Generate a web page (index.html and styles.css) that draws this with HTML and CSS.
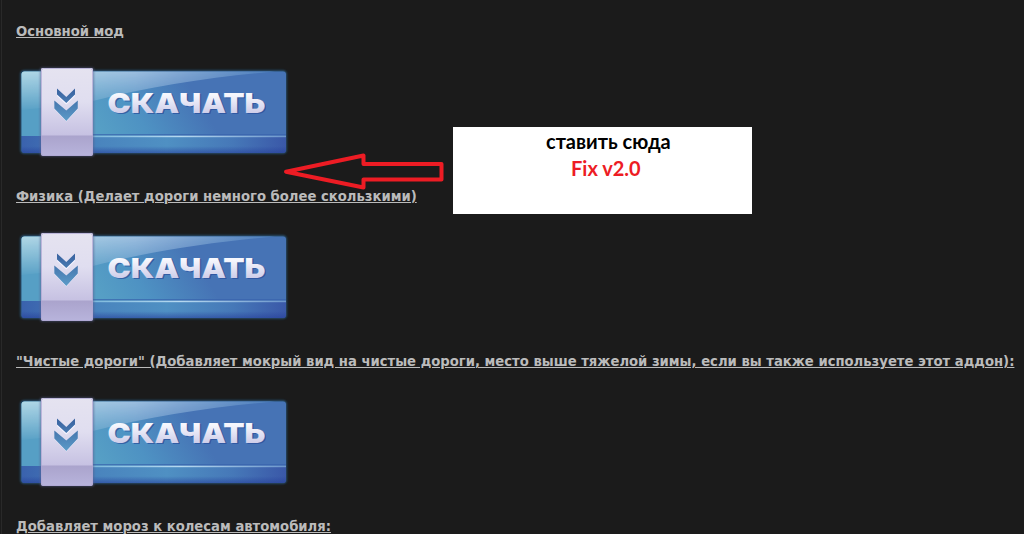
FILE: index.html
```html
<!DOCTYPE html>
<html lang="ru">
<head>
  <meta charset="UTF-8">
  <title>Скачать мод</title>
  <link rel="stylesheet" href="styles.css">
</head>
<body>

  <!-- Shared button artwork -->
  <svg class="defs" width="0" height="0">
    <defs>
      <linearGradient id="body" gradientUnits="userSpaceOnUse" x1="100" y1="130" x2="185" y2="78">
        <stop offset="0" stop-color="#569fc5"/>
        <stop offset="0.4" stop-color="#4e92c3"/>
        <stop offset="1" stop-color="#4673b5"/>
      </linearGradient>
      <linearGradient id="gloss" x1="0" y1="0" x2="1" y2="0">
        <stop offset="0" stop-color="#b9dde9"/>
        <stop offset="0.45" stop-color="#a3c3e2"/>
        <stop offset="1" stop-color="#4e7fbd"/>
      </linearGradient>
      <linearGradient id="fade" x1="0" y1="0" x2="0" y2="1">
        <stop offset="0" stop-color="#fff" stop-opacity="0.95"/>
        <stop offset="1" stop-color="#fff" stop-opacity="0.05"/>
      </linearGradient>
      <mask id="glossMask"><rect x="16" y="70" width="280" height="40" fill="url(#fade)"/></mask>
      <linearGradient id="shelf" x1="0" y1="0" x2="1" y2="0">
        <stop offset="0" stop-color="#3a62ad"/>
        <stop offset="0.3" stop-color="#4a85be"/>
        <stop offset="0.55" stop-color="#4f90c3"/>
        <stop offset="0.8" stop-color="#4678b8"/>
        <stop offset="1" stop-color="#3a58a8"/>
      </linearGradient>
      <linearGradient id="shelfShade" x1="0" y1="0" x2="0" y2="1">
        <stop offset="0.6" stop-color="#263f9a" stop-opacity="0"/>
        <stop offset="1" stop-color="#263f9a" stop-opacity="0.6"/>
      </linearGradient>
      <linearGradient id="shine" x1="0" y1="0" x2="1" y2="0">
        <stop offset="0" stop-color="#7db9dc"/>
        <stop offset="0.45" stop-color="#b6d9f0"/>
        <stop offset="1" stop-color="#6c96cc"/>
      </linearGradient>
      <linearGradient id="tab" x1="0" y1="0" x2="0" y2="1">
        <stop offset="0" stop-color="#e5e3f0"/>
        <stop offset="0.5" stop-color="#e0def0"/>
        <stop offset="1" stop-color="#c6c1e2"/>
      </linearGradient>
      <linearGradient id="tabFoot" x1="0" y1="0" x2="0" y2="1">
        <stop offset="0.75" stop-color="#a9a2cb"/>
        <stop offset="1" stop-color="#b8b4dc"/>
      </linearGradient>
      <linearGradient id="chevron" x1="0" y1="0" x2="0" y2="1">
        <stop offset="0" stop-color="#38619f"/>
        <stop offset="1" stop-color="#5c9bc8"/>
      </linearGradient>
      <linearGradient id="letters" x1="0" y1="0" x2="0" y2="1">
        <stop offset="0.25" stop-color="#f6f7fd"/>
        <stop offset="0.8" stop-color="#cecde9"/>
      </linearGradient>
      <filter id="soft"><feGaussianBlur stdDeviation="0.8"/></filter>

      <symbol id="download" viewBox="16 60 280 105">
        <rect x="20.5" y="70.5" width="266" height="83" rx="3.5" fill="#2b5e88" filter="url(#soft)"/>
        <path d="M24.500 71.500H283a3 3 0 0 1 3 3V136H21.500V74.500a3 3 0 0 1 3-3z" fill="url(#body)"/>
        <path d="M24.500 71.500H275C220 76 150 86 93 101C65 106 40 108 21.500 110V74.500a3 3 0 0 1 3-3z" fill="url(#gloss)" mask="url(#glossMask)"/>
        <path d="M21.500 136H286V150a3 3 0 0 1-3 3H24.500a3 3 0 0 1-3-3z" fill="url(#shelf)"/>
        <path d="M21.500 136H286V150a3 3 0 0 1-3 3H24.500a3 3 0 0 1-3-3z" fill="url(#shelfShade)"/>
        <rect x="93" y="134" width="193" height="1.500" fill="#3763ad" opacity="0.7"/>
        <rect x="93" y="135.700" width="193" height="1.500" fill="url(#shine)"/>
        <rect x="40" y="67.500" width="54" height="89" rx="2" fill="#58608e" opacity="0.6" filter="url(#soft)"/>
        <rect x="41" y="68" width="52" height="88" rx="2" fill="url(#tabFoot)"/>
        <path d="M43 68H91a2 2 0 0 1 2 2V135.500H41V70a2 2 0 0 1 2-2z" fill="url(#tab)"/>
        <rect x="41.500" y="68.500" width="51" height="87" rx="2" fill="none" stroke="#aca4d1" opacity="0.7"/>
        <path d="M57 89.500l9.300 8 8.700-8v5.500l-8.700 8.500-9.300-8.500zM54.300 101l12 10 11.500-10v7l-11.500 12.500-12-12.500z" transform="translate(0 1)" fill="#f5f4ff"/>
        <path d="M57 88.500l9.300 8.500 8.700-8.500v6l-8.700 8.500-9.300-8.500zM54.300 100.500l12 10 11.500-10v8l-11.500 12.500-12-12.500z" fill="url(#chevron)"/>
        <text class="label label-shadow" x="109" y="114" textLength="158" lengthAdjust="spacingAndGlyphs">СКАЧАТЬ</text>
        <text class="label" x="107.500" y="112.700" textLength="158" lengthAdjust="spacingAndGlyphs">СКАЧАТЬ</text>
      </symbol>
    </defs>
  </svg>

  <div class="content">
    <div class="item">
      <a class="title">Основной мод</a>
      <svg class="button"><use href="#download"/></svg>
    </div>
    <div class="item">
      <a class="title">Физика (Делает дороги немного более скользкими)</a>
      <svg class="button"><use href="#download"/></svg>
    </div>
    <div class="item">
      <a class="title">"Чистые дороги" (Добавляет мокрый вид на чистые дороги, место выше тяжелой зимы, если вы также используете этот аддон):</a>
      <svg class="button"><use href="#download"/></svg>
    </div>
    <div class="item item-last">
      <a class="title">Добавляет мороз к колесам автомобиля:</a>
    </div>
  </div>

  <!-- Notes over the page -->
  <svg class="arrow" viewBox="280 150 170 45">
    <path d="M286 171.700L363.500 155.500V164H441.500V179.500H363.500V187.500Z" fill="none" stroke="#ed1c24" stroke-width="4" stroke-linejoin="round"/>
  </svg>
  <div class="note">
    <div class="note-text">ставить сюда</div>
    <div class="note-version">Fix v2.0</div>
  </div>

</body>
</html>
```
FILE: styles.css
```css
body {
  margin: 0;
  height: 534px;
  overflow: hidden;
  position: relative;
  background-color: #1b1b1b;
  font-family: "DejaVu Sans Condensed", "DejaVu Sans", sans-serif;
}

.defs {
  position: absolute;
}

.content {
  height: 534px;
  box-sizing: border-box;
  margin-left: 1px;
  padding: 21px 0 0 15px;
  border-left: 1px solid #292929;
}

.item {
  display: flex;
  flex-direction: column;
  align-items: flex-start;
  height: 165px;
}

.item-last {
  height: 18px;
}

.title {
  height: 20px;
  margin-bottom: 19px;
  margin-left: -1px;
  color: #bbb;
  font-size: 14.67px;
  font-weight: bold;
  font-stretch: condensed;
  line-height: 20px;
  white-space: nowrap;
  text-decoration: underline;
  text-decoration-thickness: 1px;
  text-underline-offset: 1px;
}

.item-last .title {
  height: 18px;
  margin-bottom: 0;
}

.button {
  display: block;
  width: 280px;
  height: 105px;
  margin-left: -1px;
}

.label {
  font-family: Inter, "Liberation Sans", sans-serif;
  font-size: 27px;
  font-weight: 900;
  fill: url(#letters);
}

.label-shadow {
  fill: #294e9b;
  opacity: 0.7;
}

.arrow {
  position: absolute;
  left: 280px;
  top: 150px;
  width: 170px;
  height: 45px;
}

.note {
  position: absolute;
  left: 453px;
  top: 127px;
  width: 299px;
  height: 87px;
  box-sizing: border-box;
  padding-top: 1px;
  background-color: #fff;
  font-family: Lato, "Noto Sans", sans-serif;
  font-size: 20px;
  font-weight: bold;
  line-height: 27px;
  white-space: nowrap;
}

.note-text {
  padding-left: 93px;
  color: #000;
}

.note-version {
  padding-left: 118px;
  color: #ed1c24;
}
```
